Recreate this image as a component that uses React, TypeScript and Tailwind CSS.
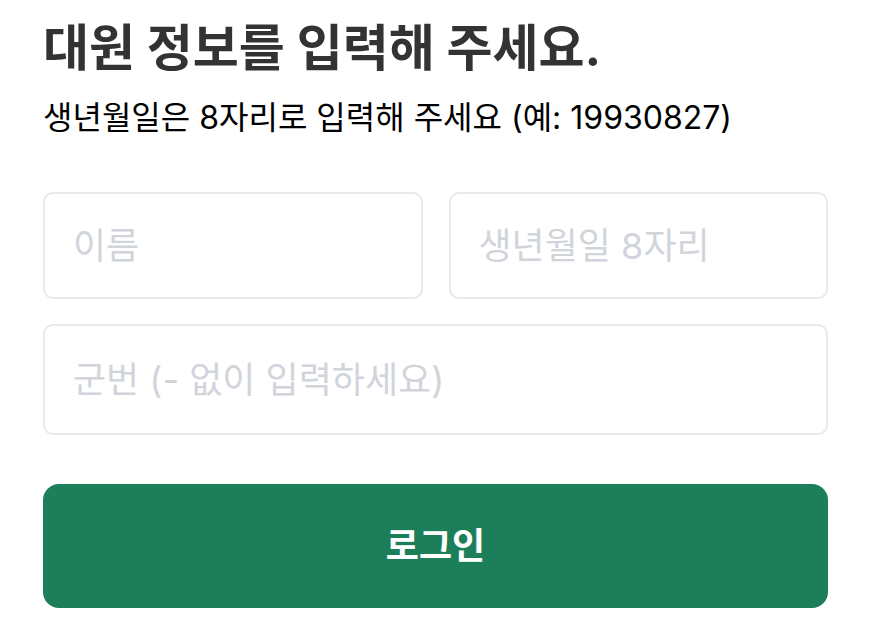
import React from 'react'

const FONT = "font-['Inter','Noto_Sans_CJK_KR',sans-serif]"

function Field({ placeholder, className = '' }: { placeholder: string; className?: string }) {
  return (
    <input
      type="text"
      placeholder={placeholder}
      className={`h-[107px] w-full rounded-[10px] border-2 border-[#e8e9ec] bg-white px-[28px] text-[36px] text-[#333] placeholder:text-[#d1d5db] outline-none ${FONT} ${className}`}
    />
  )
}

export default function App() {
  return (
    <div className={`min-h-screen bg-white pl-[43px] pr-[41px] pt-[18px] ${FONT}`}>
      <h1 className="text-[50px] font-bold leading-[60px] text-[#333]">
        대원 정보를 입력해 주세요.
      </h1>
      <p className="mt-[18px] text-[32px] leading-[44px] text-black">
        생년월일은 8자리로 입력해 주세요 (예: 19930827)
      </p>

      <div className="mt-[52px] flex flex-col gap-[25px]">
        <div className="grid grid-cols-2 gap-[26px]">
          <Field placeholder="이름" />
          <Field placeholder="생년월일 8자리" />
        </div>
        <Field placeholder="군번 (- 없이 입력하세요)" className="h-[111px]" />
      </div>

      <button
        type="button"
        className="mt-[49px] flex h-[124px] w-full items-center justify-center rounded-[16px] bg-[#1d7f5a] text-[36px] font-bold text-white"
      >
        로그인
      </button>
    </div>
  )
}
